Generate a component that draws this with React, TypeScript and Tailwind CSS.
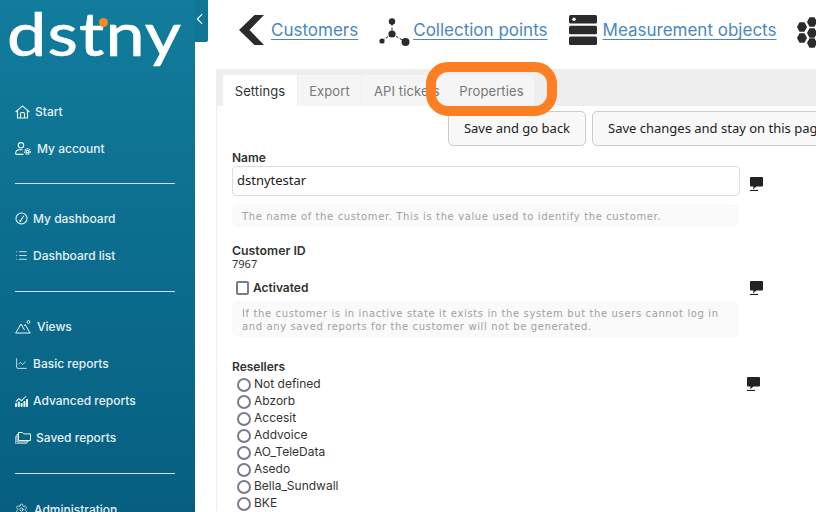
import { ChartLine, List, Settings } from 'lucide-react'
import type { ReactNode } from 'react'

const resellers = ['Not defined', 'Abzorb', 'Accesit', 'Addvoice', 'AO_TeleData', 'Asedo', 'Bella_Sundwall', 'BKE']

function HomeIcon() {
  return (
    <svg viewBox="0 0 15 14" className="w-[15px] h-[14px]" fill="none" stroke="currentColor" strokeWidth="1.100">
      <path d="M.6 7 7.500 .9 14.400 7" />
      <path d="M2.500 5.800V13h10V5.800" />
      <path d="M5.500 13V8.500a1 1 0 0 1 1-1h2a1 1 0 0 1 1 1V13" />
    </svg>
  )
}

function AccountIcon() {
  return (
    <svg viewBox="0 0 16 13" className="w-[16px] h-[13px]" fill="none" stroke="currentColor" strokeWidth="1.100">
      <circle cx="6" cy="3.300" r="2.700" />
      <path d="M8.500 12.400H1.400a.8.8 0 0 1-.8-.9C.9 9.200 2.500 7.800 4 7.800h3.500" />
      <circle cx="12.500" cy="9.500" r="1.300" />
      <circle cx="12.500" cy="9.500" r="2.700" strokeDasharray="1.500 .8" strokeWidth="1.400" />
    </svg>
  )
}

function GaugeIcon() {
  return (
    <svg viewBox="0 0 14 14" className="w-[13px] h-[13px]" fill="none" stroke="currentColor">
      <circle cx="7" cy="7" r="6" strokeWidth="1.100" />
      <path d="M6 9.500 9.500 4" strokeWidth="1.100" />
      <circle cx="5.700" cy="9.700" r="1.200" fill="currentColor" stroke="none" />
    </svg>
  )
}

function ViewsIcon() {
  return (
    <svg viewBox="0 0 16 14" className="w-[16px] h-[14px]" fill="none" stroke="currentColor" strokeWidth="1">
      <path d="M.6 13 6 4l3.500 6M.6 13h15M9 6l1.200-1.500L15 13" />
      <circle cx="13.500" cy="2" r="1.400" />
    </svg>
  )
}

function AdvancedIcon() {
  return (
    <svg viewBox="0 0 13 12" className="w-[13px] h-[12px]" fill="currentColor">
      <path d="M.5 6 4 3l2.500 2L11 .8l.5.5L6.600 6.400 4 4.400 1 7z" />
      <rect x="0" y="8" width="2" height="4" rx=".8" />
      <rect x="2.800" y="6.500" width="2" height="5.500" rx=".8" />
      <rect x="5.600" y="8" width="2" height="4" rx=".8" />
      <rect x="8.400" y="6" width="2" height="6" rx=".8" />
      <rect x="11" y="4" width="2" height="8" rx=".8" />
    </svg>
  )
}

function FoldersIcon() {
  return (
    <svg viewBox="0 0 16 13" className="w-[16px] h-[13px]" fill="none" stroke="currentColor" strokeWidth="1">
      <path d="M3.500 9.500V1.500h4l1.200 1.400h6.800v6.600z" />
      <path d="M3.500 3.500H2v7.500h11V9.500" />
      <path d="M2 5.500H.5v7h11V11" opacity=".6" />
    </svg>
  )
}

function CommentIcon() {
  return (
    <svg viewBox="0 0 13 14" className="w-[13px] h-[14px] shrink-0" fill="#222">
      <path d="M1 0h11a1 1 0 0 1 1 1v7.500a1 1 0 0 1-1 1H6.500L3 12.300l.5-2.800H1a1 1 0 0 1-1-1V1a1 1 0 0 1 1-1z" />
      <rect x="0" y="12.900" width="8" height="1.100" />
    </svg>
  )
}

function BackIcon() {
  return (
    <svg viewBox="0 0 25 30" className="w-[25px] h-[30px]" fill="#2b2b2b">
      <path d="M0 15 15.500 0H25L10.500 15 25 30h-9.500z" />
    </svg>
  )
}

function PointsIcon() {
  return (
    <svg viewBox="0 0 31 28" className="w-[31px] h-[28px] mt-[3px]" fill="#2b2b2b" stroke="#2b2b2b">
      <path d="M13 5v12M13 16l-9 6M13 16l12 7" strokeWidth="1" strokeDasharray="3 1.500" />
      <circle cx="13" cy="3.500" r="3.200" stroke="none" />
      <circle cx="13" cy="16" r="3.600" stroke="none" />
      <circle cx="3" cy="23" r="2.600" stroke="none" />
      <circle cx="26.500" cy="24" r="4" stroke="none" />
    </svg>
  )
}

function ServerIcon() {
  return (
    <svg viewBox="0 0 28 30" className="w-[28px] h-[30px]" fill="#2b2b2b">
      <rect x="0" y="0" width="28" height="8.500" rx="1.500" />
      <rect x="0" y="10.700" width="28" height="8.500" rx="1.500" />
      <rect x="0" y="21.500" width="28" height="8.500" rx="1.500" />
      <circle cx="5" cy="4.300" r="1.700" fill="#fff" />
    </svg>
  )
}

function HexIcon() {
  const hex = [[5, 10], [5, 21], [15, 5], [15, 16], [15, 26]]
  return (
    <svg viewBox="0 0 20 32" className="w-[20px] h-[32px] mt-[2px] shrink-0" fill="#2b2b2b">
      {hex.map(([x, y]) => (
        <polygon key={`${x}-${y}`} points={`${x - 5},${y} ${x - 2.500},${y - 4.700} ${x + 2.500},${y - 4.700} ${x + 5},${y} ${x + 2.500},${y + 4.700} ${x - 2.500},${y + 4.700}`} />
      ))}
    </svg>
  )
}

function NavRow({ icon, label, gap }: { icon: ReactNode; label: string; gap: string }) {
  return (
    <div className={`h-[37px] pl-[15px] flex items-center text-[12px] font-medium text-[#e6f1f5] ${gap}`}>
      <span className="flex items-center text-[#eef6f8]">{icon}</span>
      <span>{label}</span>
    </div>
  )
}

function Divider({ height }: { height: string }) {
  return (
    <div className={`flex items-center pl-[15px] ${height}`}>
      <div className="w-[160px] h-px bg-[#d5dfe3]" />
    </div>
  )
}

function TopLink({ icon, label, gap }: { icon: ReactNode; label: string; gap: string }) {
  return (
    <div className={`flex items-start shrink-0 ${gap}`}>
      {icon}
      <a className="mt-[2px] text-[#4a87bf] text-[17px] leading-[26px] underline underline-offset-[3px] decoration-1">{label}</a>
    </div>
  )
}

function Help({ children }: { children: ReactNode }) {
  return (
    <div className="w-[507px] bg-[#fafafa] rounded-md px-[10px] pt-[6px] pb-[4px] text-[#a0a0a0] text-[10px] leading-[13px] tracking-[0.62px] font-['DejaVu_Sans',sans-serif]">
      {children}
    </div>
  )
}

export default function App() {
  return (
    <div className="relative w-[816px] h-[512px] overflow-hidden flex bg-white font-['Inter',sans-serif]">
      {/* sidebar */}
      <aside className="relative w-[195px] shrink-0 bg-gradient-to-b from-[#127c9c] to-[#065f80]">
        <div className="relative h-[93px] pl-[7px]">
          <div className="inline-block origin-left scale-x-[1.17] text-white text-[60px] leading-[67px] font-normal tracking-[1px] [-webkit-text-stroke:0.7px_white] font-['Lato',sans-serif]">dstny</div>
          <span className="absolute left-[99px] top-[18px] w-[9px] h-[9px] rounded-full bg-[#f58a1f]" />
        </div>
        <NavRow icon={<HomeIcon />} label="Start" gap="gap-[5px]" />
        <NavRow icon={<AccountIcon />} label="My account" gap="gap-[6px]" />
        <Divider height="h-[33px]" />
        <NavRow icon={<GaugeIcon />} label="My dashboard" gap="gap-[5px]" />
        <NavRow icon={<List size={13} strokeWidth={1.5} />} label="Dashboard list" gap="gap-[5px]" />
        <Divider height="h-[34px]" />
        <NavRow icon={<ViewsIcon />} label="Views" gap="gap-[6px]" />
        <NavRow icon={<ChartLine size={13} strokeWidth={1.5} />} label="Basic reports" gap="gap-[5px]" />
        <NavRow icon={<AdvancedIcon />} label="Advanced reports" gap="gap-[5px]" />
        <NavRow icon={<FoldersIcon />} label="Saved reports" gap="gap-[5px]" />
        <Divider height="h-[35px]" />
        <NavRow icon={<Settings size={13} strokeWidth={1.5} />} label="Administration" gap="gap-[6px]" />
        <div className="absolute left-[195px] top-0 w-[13px] h-[42px] bg-[#0f7696] pt-[13px] pl-[1px] rounded-br-[2px]">
          <svg viewBox="0 0 8 13" className="w-[7px] h-[12px]" fill="none" stroke="#fff" strokeWidth="1.300">
            <path d="M7 1 1.500 6.500 7 12" />
          </svg>
        </div>
      </aside>

      {/* main */}
      <main className="flex-1 min-w-0">
        <div className="h-[69px] pl-[44px] pt-[15px] flex items-start gap-[21px]">
          <TopLink icon={<BackIcon />} label="Customers" gap="gap-[7px]" />
          <TopLink icon={<PointsIcon />} label="Collection points" gap="gap-[3px]" />
          <TopLink icon={<ServerIcon />} label="Measurement objects" gap="gap-[6px]" />
          <HexIcon />
        </div>

        <div className="ml-[21px] border-l border-[#eee]">
          <div className="h-[37px] bg-[#eee] pl-[6px] pt-[6px] flex text-[13px] tracking-[0.1px] text-[#777]">
            <div className="w-[74px] pt-[2px] bg-white text-[#333] flex items-center justify-center">Settings</div>
            <div className="w-[64px] pt-[2px] bg-[#f5f5f5] border-l border-[#eee] flex items-center justify-center">Export</div>
            <div className="w-[86px] pt-[2px] bg-[#f5f5f5] border-l border-[#eee] pl-[12px] flex items-center whitespace-nowrap overflow-hidden">API tickets</div>
            <div className="w-[87px] pt-[2px] pl-[2px] bg-[#f5f5f5] flex items-center justify-center">Properties</div>
          </div>

          <div className="h-[47px] pt-[5px] pl-[231px] flex gap-[6px] text-[13px] text-[#222] font-['Noto_Sans',sans-serif]">
            <button className="w-[138px] h-[35px] shrink-0 bg-[#f8f8f8] border border-[#ccc] rounded-[5px]">Save and go back</button>
            <button className="h-[35px] shrink-0 px-[15px] bg-[#f8f8f8] border border-[#ccc] rounded-[5px] whitespace-nowrap">Save changes and stay on this page</button>
          </div>

          <div className="pl-[15px] text-[12px] text-[#333]">
            <div className="text-[12px] leading-[9px] font-semibold text-[#333]">Name</div>
            <div className="mt-[4px] flex">
              <div className="w-[508px] h-[30px] border border-[#ddd] rounded-[4px] pl-[4px] flex items-center text-[13px] text-[#222] font-['Noto_Sans',sans-serif]">dstnytestar</div>
              <div className="ml-[10px] mt-[11px]"><CommentIcon /></div>
            </div>
            <div className="mt-[8px]"><Help>The name of the customer. This is the value used to identify the customer.</Help></div>

            <div className="mt-[17px] leading-[13px] text-[12.300px] font-semibold">Customer ID</div>
            <div className="text-[11px] leading-[13px] font-['Noto_Sans',sans-serif]">7967</div>

            <div className="mt-[9px] flex">
              <div className="w-[508px] pl-[4px] flex items-center gap-[4px]">
                <span className="w-[13px] h-[14px] border-2 border-[#7b7b8c] rounded-[2px] bg-white" />
                <span className="font-semibold text-[12px]">Activated</span>
              </div>
              <div className="ml-[10px] mt-[2px]"><CommentIcon /></div>
            </div>
            <div className="mt-[4px]">
              <Help>
                If the customer is in inactive state it exists in the system but the users cannot log in
                <br />
                and any saved reports for the customer will not be generated.
              </Help>
            </div>

            <div className="mt-[24px] flex">
              <div className="w-[508px]">
                <div className="leading-[12px] font-semibold">Resellers</div>
                <div className="mt-[2px] text-[12px]">
                  {resellers.map((r) => (
                    <div key={r} className="h-[17px] pl-[5px] flex items-center gap-[3px]">
                      <span className="w-[14px] h-[14px] mt-[2px] border-2 border-[#7b7b8c] rounded-full bg-white" />
                      <span>{r}</span>
                    </div>
                  ))}
                </div>
              </div>
              <div className="ml-[7px] mt-[16px]"><CommentIcon /></div>
            </div>
          </div>
        </div>
      </main>

      {/* highlight round the Properties tab */}
      <div className="absolute left-[426px] top-[62px] w-[131px] h-[54px] border-[10px] border-[#fd7e23] rounded-[22px]" />
    </div>
  )
}
